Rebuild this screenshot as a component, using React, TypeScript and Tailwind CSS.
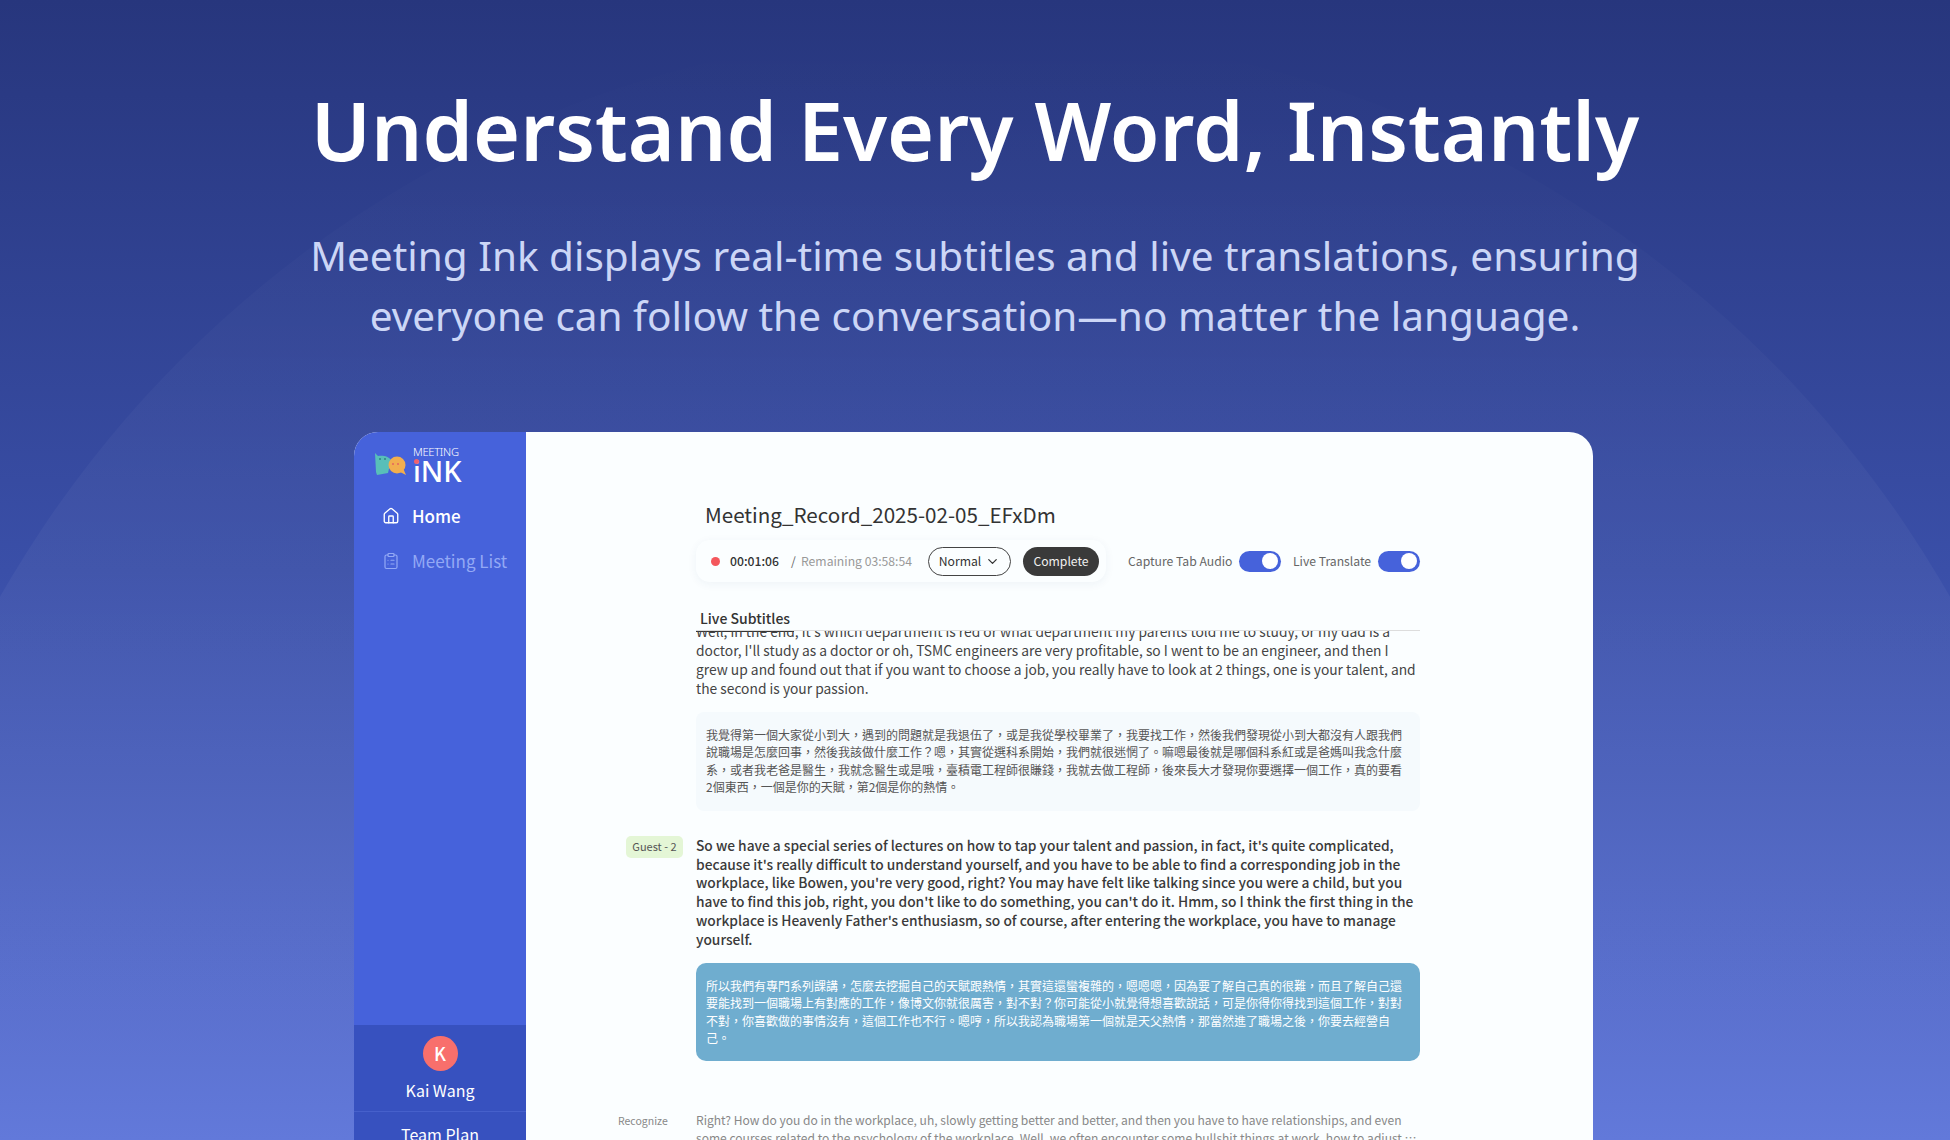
import { ChevronDown, ClipboardList, House } from "lucide-react";

const appFont = "font-['Noto_Sans_CJK_TC','Noto_Sans',sans-serif]";

// the Chinese lines use full-width punctuation
const zh = (s: string) => s.replace(/,/g, "\uFF0C").replace(/\?/g, "\uFF1F");

const Logo = () => (
  <div className="flex items-start gap-[7px] pl-[20px] pt-[14px]">
    <svg width="32" height="26" viewBox="0 0 32 26" className="mt-[6px]">
      <path d="M1 1 L4 4 C8 3 15 4 17 8 L14 21 L3 23 L2 20 Z" fill="#58bfb9" />
      <circle cx="23" cy="13" r="8.5" fill="#f2ae4e" />
      <path d="M26 20 L32 23 L29 16 Z" fill="#f2ae4e" />
      <circle cx="6" cy="7" r="1" fill="#2f7f86" />
      <circle cx="11" cy="7" r="1" fill="#2f7f86" />
      <circle cx="19" cy="12" r="1" fill="#e5655f" />
      <circle cx="24" cy="12" r="1" fill="#e5655f" />
    </svg>
    <div className="relative flex flex-col text-white">
      <span className="font-['Noto_Sans',sans-serif] text-[11.2px] leading-[12px] font-light tracking-[-0.3px]">MEETING</span>
      <span className="font-['Noto_Sans',sans-serif] text-[29px] leading-[25px] font-medium">iNK</span>
      <span className="absolute left-[1px] top-[13px] h-[5px] w-[5px] rounded-full bg-[#f0616d]" />
    </div>
  </div>
);

const Sidebar = () => (
  <aside className="flex w-[172px] shrink-0 flex-col bg-[#4662db]">
    <Logo />
    <nav className="mt-[18px] flex flex-col gap-[15px] pl-[28px]">
      <div className="flex h-[30px] items-center gap-[12px] text-[17px] font-medium text-white">
        <House size={18} strokeWidth={1.8} />
        Home
      </div>
      <div className="flex h-[30px] items-center gap-[12px] text-[17px] text-[#93a9f5]">
        <ClipboardList size={18} strokeWidth={1.6} />
        Meeting List
      </div>
    </nav>
    <div className="mt-[449px] flex flex-1 flex-col items-center bg-[#3751bf] text-white">
      <div className="mt-[11px] flex h-[35px] w-[35px] items-center justify-center rounded-full bg-[#f86f6c] text-[18px] font-medium">
        K
      </div>
      <div className="mt-[7px] text-[16px] leading-[24px]">Kai Wang</div>
      <div className="mt-[9px] h-px w-full bg-[#4660cb]" />
      <div className="mt-[10px] text-[16px] leading-[24px]">Team Plan</div>
    </div>
  </aside>
);

const Toggle = () => (
  <div className="flex h-[21px] w-[42px] items-center justify-end rounded-full bg-[#4662db] pr-[3px]">
    <div className="h-[16px] w-[16px] rounded-full bg-white" />
  </div>
);

const Controls = () => (
  <div className="mt-[10px] flex h-[42px] items-center text-[12.2px] whitespace-nowrap">
    <div className="flex h-full w-[410px] shrink-0 items-center rounded-[14px] pl-[15px] shadow-[0_2px_10px_rgba(40,60,120,0.06)]">
      <div className="h-[9px] w-[9px] rounded-full bg-[#f4575c]" />
      <span className="ml-[10px] w-[50px] font-medium text-[#333]">00:01:06</span>
      <span className="ml-[11px] w-[4px] text-[#666]">/</span>
      <span className="ml-[6px] w-[110px] text-[#999]">Remaining 03:58:54</span>
      <div className="ml-[17px] flex h-[29px] w-[83px] items-center justify-center gap-[4px] rounded-full border border-[#444] text-[#333]">
        Normal
        <ChevronDown size={15} strokeWidth={2} />
      </div>
      <div className="ml-[12px] flex h-[29px] w-[76px] items-center justify-center rounded-full bg-[#3a3a3a] text-[#f0f0f0]">
        Complete
      </div>
    </div>
    <span className="ml-[22px] w-[103px] text-[#666]">Capture Tab Audio</span>
    <div className="ml-[8px]">
      <Toggle />
    </div>
    <span className="ml-[12px] w-[79px] text-[#666]">Live Translate</span>
    <div className="ml-[6px]">
      <Toggle />
    </div>
  </div>
);

const Transcript = () => (
  <div className="flex-1 overflow-hidden">
    <div className="flex">
      <div className="w-[92px] shrink-0" />
      <div className="w-[724px]">
        <p className="-mt-[9px] text-[13.8px] leading-[19px] text-[#444]">
          Well, in the end, it's which department is red or what department my parents told me to study, or my dad is a
          doctor, I'll study as a doctor or oh, TSMC engineers are very profitable, so I went to be an engineer, and then I
          grew up and found out that if you want to choose a job, you really have to look at 2 things, one is your talent, and
          the second is your passion.
        </p>
        <div className="mt-[14px] rounded-[8px] bg-[#f5fafd] pt-[14px] pr-[12px] pb-[15px] pl-[10px] text-[12px] leading-[17.4px] text-[#555]">
          {zh("我覺得第一個大家從小到大,遇到的問題就是我退伍了,或是我從學校畢業了,我要找工作,然後我們發現從小到大都沒有人跟我們說職場是怎麼回事,然後我該做什麼工作?嗯,其實從選科系開始,我們就很迷惘了。嘛嗯最後就是哪個科系紅或是爸媽叫我念什麼系,或者我老爸是醫生,我就念醫生或是哦,臺積電工程師很賺錢,我就去做工程師,後來長大才發現你要選擇一個工作,真的要看2個東西,一個是你的天賦,第2個是你的熱情。")}
        </div>
      </div>
    </div>
    <div className="mt-[25px] flex">
      <div className="flex w-[92px] shrink-0 justify-end pr-[13px]">
        <span className="flex h-[22px] w-[57px] items-center justify-center rounded-[5px] bg-[#e4f6d6] text-[11px] text-[#555]">
          Guest - 2
        </span>
      </div>
      <div className="w-[724px]">
        <p className="text-[13.75px] leading-[18.9px] font-medium text-[#3a3a3a]">
          So we have a special series of lectures on how to tap your talent and passion, in fact, it's quite complicated,
          because it's really difficult to understand yourself, and you have to be able to find a corresponding job in the
          workplace, like Bowen, you're very good, right? You may have felt like talking since you were a child, but you
          have to find this job, right, you don't like to do something, you can't do it. Hmm, so I think the first thing in the
          workplace is Heavenly Father's enthusiasm, so of course, after entering the workplace, you have to manage
          yourself.
        </p>
        <div className="mt-[14px] rounded-[10px] bg-[#6fadcf] px-[10px] pt-[14px] pb-[14px] text-[12px] leading-[17.4px] text-white">
          {zh("所以我們有專門系列課講,怎麼去挖掘自己的天賦跟熱情,其實這還蠻複雜的,嗯嗯嗯,因為要了解自己真的很難,而且了解自己還要能找到一個職場上有對應的工作,像博文你就很厲害,對不對?你可能從小就覺得想喜歡說話,可是你得你得找到這個工作,對對不對,你喜歡做的事情沒有,這個工作也不行。嗯哼,所以我認為職場第一個就是天父熱情,那當然進了職場之後,你要去經營自己。")}
        </div>
      </div>
    </div>
    <div className="mt-[50px] flex">
      <div className="w-[92px] shrink-0 pl-[14px] pt-[2px] text-[10.5px] text-[#888]">Recognize</div>
      <p className="line-clamp-2 w-[724px] text-[12.05px] leading-[18px] text-[#888]">
        Right? How do you do in the workplace, uh, slowly getting better and better, and then you have to have relationships, and even
        some courses related to the psychology of the workplace. Well, we often encounter some bullshit things at work, how to adjust to the mood and keep going every single day
      </p>
    </div>
  </div>
);

const App = () => {
  return (
    <div className="relative h-[1140px] w-[1950px] overflow-hidden bg-gradient-to-b from-[#27367d] via-[#3a4fa8] to-[#5a72d8]">
      <div className="absolute left-[-147px] top-[30px] h-[2244px] w-[2244px] rounded-full bg-gradient-to-b from-white/0 to-white/[0.05] to-30%" />
      <div className="relative flex flex-col items-center pt-[77px] font-['Noto_Sans',sans-serif]">
        <h1 className="text-[80.7px] leading-[106px] font-semibold whitespace-nowrap text-white">
          Understand Every Word, Instantly
        </h1>
        <p className="mt-[43px] text-center text-[40.5px] leading-[60px] font-normal text-[#ccd6f6]">
          Meeting Ink displays real-time subtitles and live translations, ensuring
          <br />
          everyone can follow the conversation—no matter the language.
        </p>
      </div>
      <div className={`relative ml-[354px] mt-[86px] flex h-[760px] w-[1239px] overflow-hidden rounded-[24px] bg-[#fbfeff] ${appFont}`}>
        <Sidebar />
        <main className="flex flex-1 flex-col pl-[78px]">
          <h2 className="mt-[66px] ml-[101px] text-[20.6px] leading-[32px] text-[#333]">Meeting_Record_2025-02-05_EFxDm</h2>
          <div className="ml-[92px] w-[724px]">
            <Controls />
            <div className="mt-[23px] h-[26px] border-b border-[#ddd]">
              <span className="inline-block h-[26px] border-b border-[#333] px-[4px] text-[14px] leading-[24px] font-medium text-[#333]">
                Live Subtitles
              </span>
            </div>
          </div>
          <Transcript />
        </main>
      </div>
    </div>
  );
};

export default App;
